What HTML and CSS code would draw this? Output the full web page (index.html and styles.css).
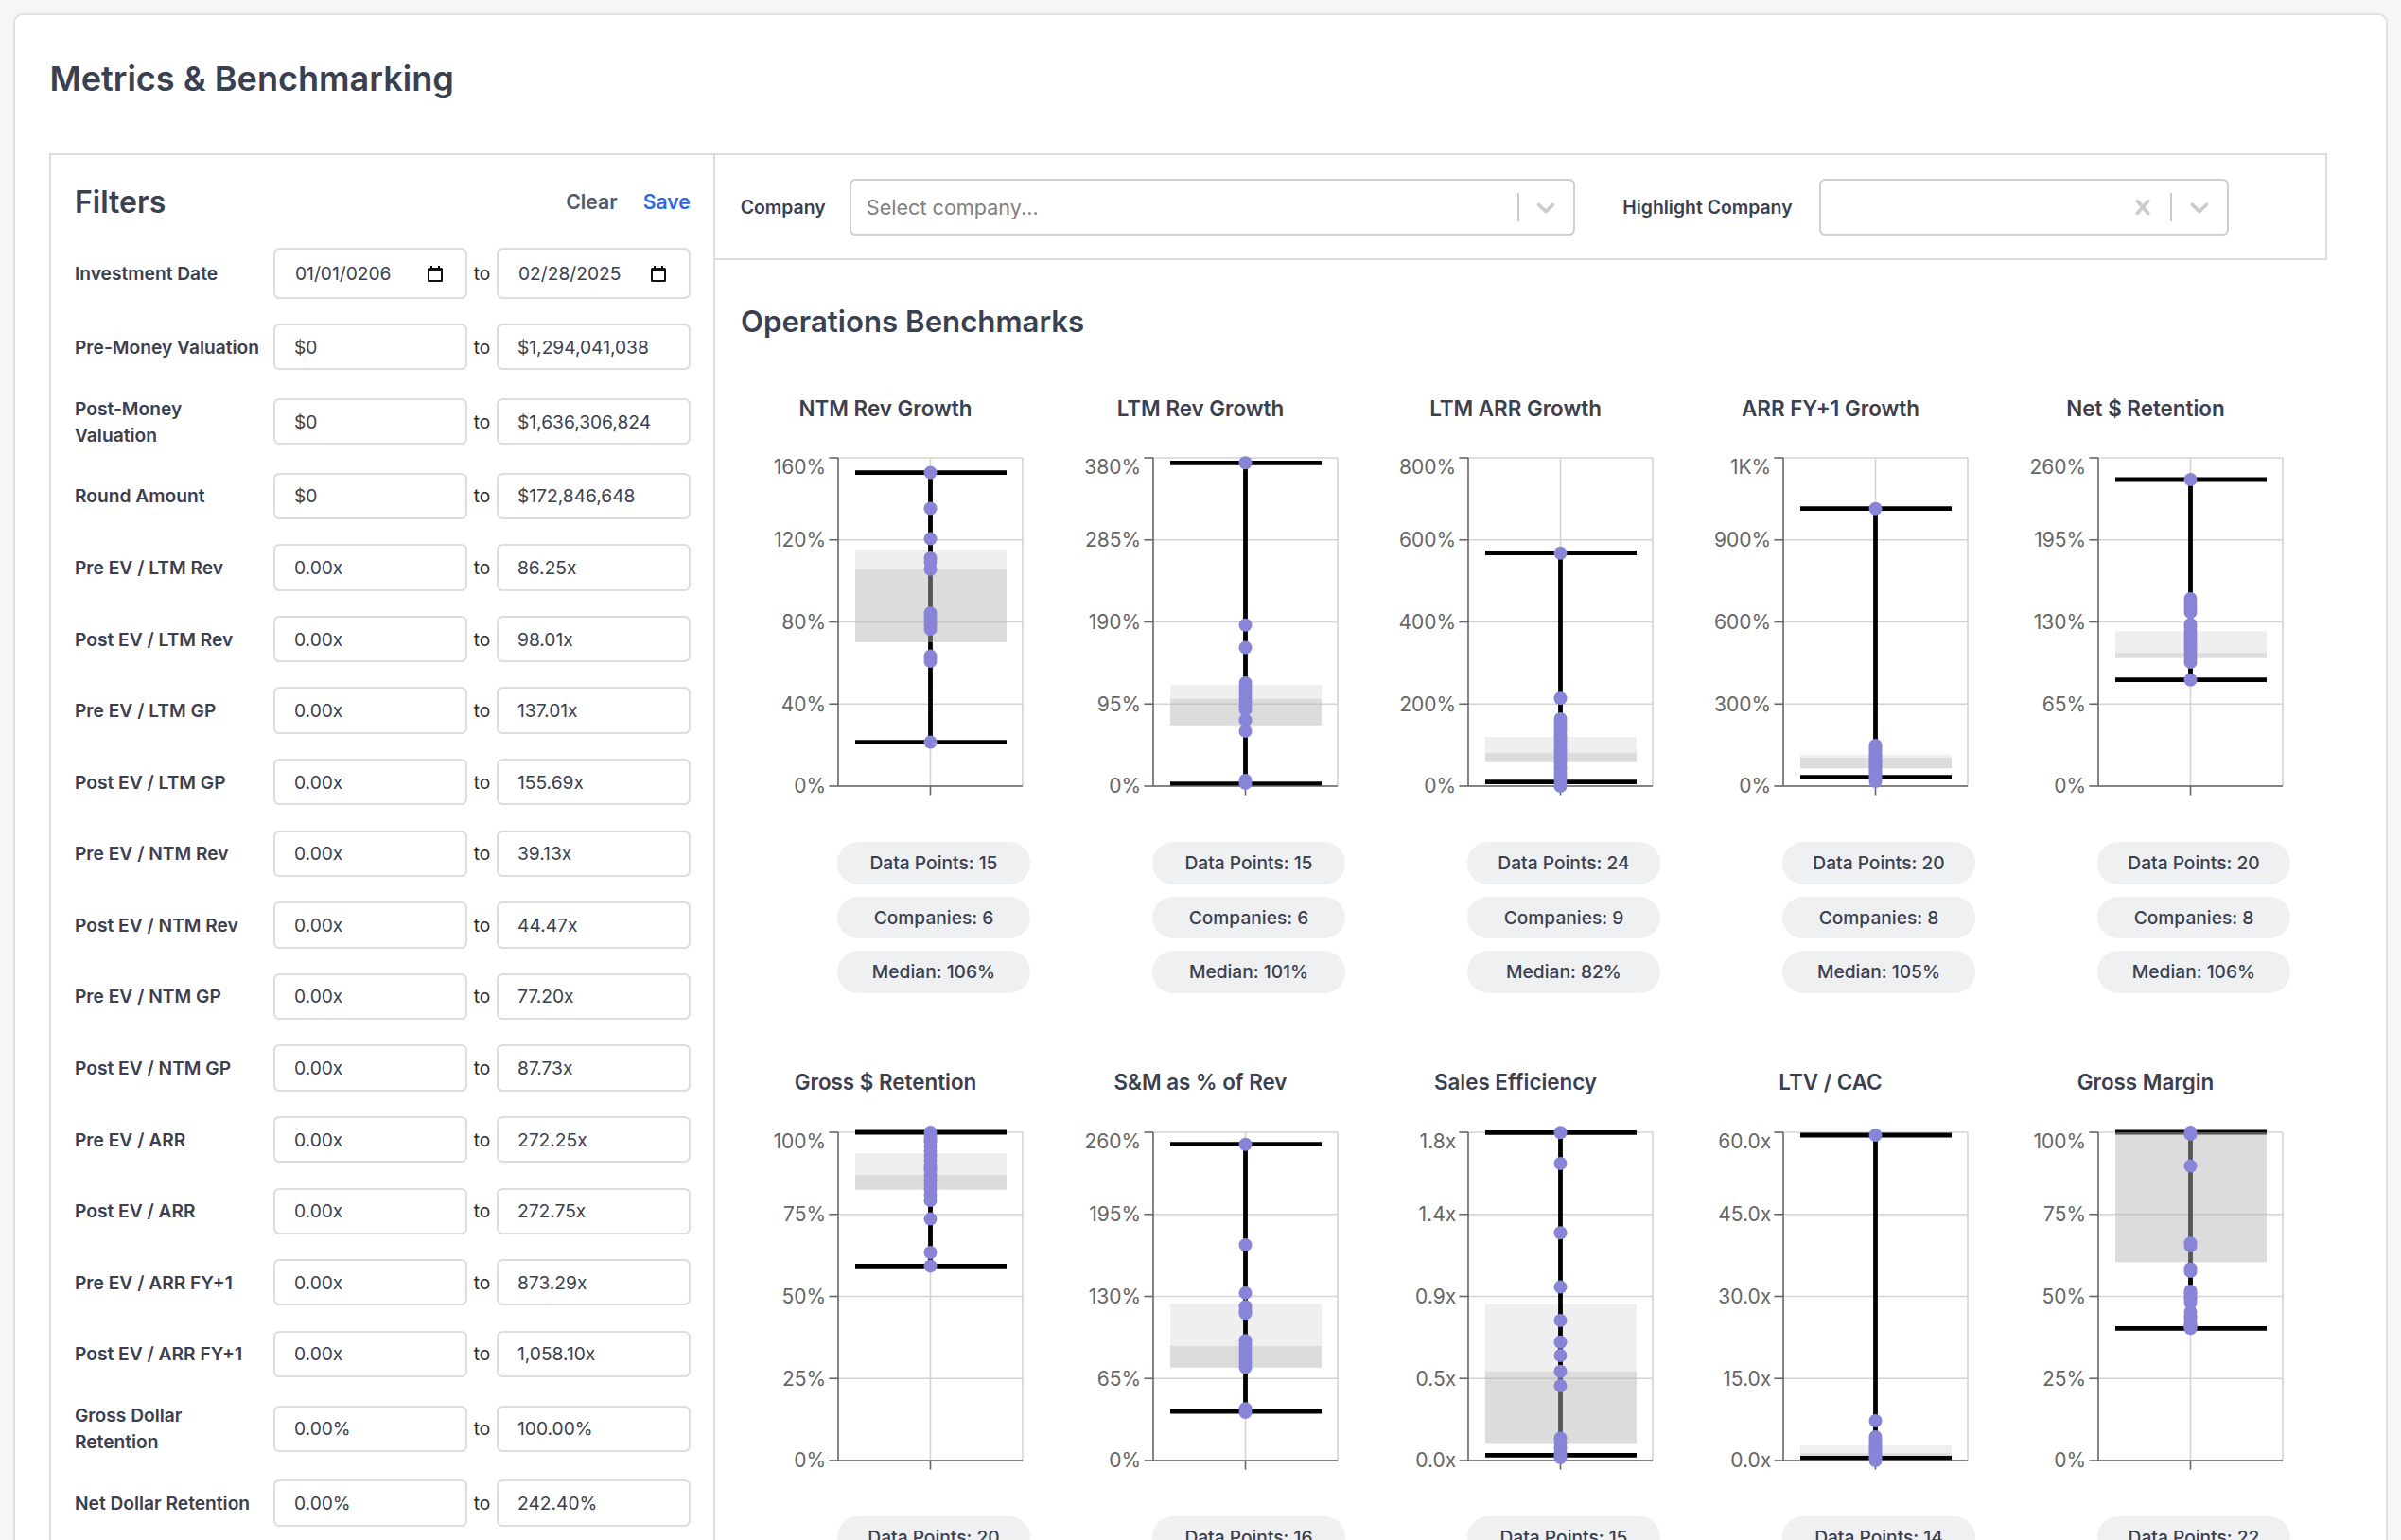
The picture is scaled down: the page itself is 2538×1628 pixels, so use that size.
FILE: index.html
```html
<!DOCTYPE html>
<html lang="en">
<head>
<meta charset="utf-8">
<title>Metrics &amp; Benchmarking</title>
<link rel="stylesheet" href="styles.css">
</head>
<body>
<div class="card">
  <h1 class="page-title">Metrics &amp; Benchmarking</h1>
  <div class="layout">
    <aside class="filters">
      <div class="filters-head">
        <h2>Filters</h2>
        <div class="actions">
          <button class="btn btn-clear" type="button">Clear</button>
          <button class="btn btn-save" type="button">Save</button>
        </div>
      </div>
      <div class="rows">
        <div class="row">
          <div class="lbl">Investment Date</div>
          <div class="inp date"><span>01/01/0206</span><svg class="cal" width="16" height="17" viewBox="0 0 16 17"><path fill="#111" fill-rule="evenodd" d="M3 0h2v2h6V0h2v2h1.5A1.5 1.5 0 0 1 16 3.5v12A1.5 1.5 0 0 1 14.5 17h-13A1.5 1.5 0 0 1 0 15.5v-12A1.5 1.5 0 0 1 1.5 2H3zM2 6v9h12V6z"/></svg></div>
          <div class="to">to</div>
          <div class="inp date"><span>02/28/2025</span><svg class="cal" width="16" height="17" viewBox="0 0 16 17"><path fill="#111" fill-rule="evenodd" d="M3 0h2v2h6V0h2v2h1.5A1.5 1.5 0 0 1 16 3.5v12A1.5 1.5 0 0 1 14.5 17h-13A1.5 1.5 0 0 1 0 15.5v-12A1.5 1.5 0 0 1 1.5 2H3zM2 6v9h12V6z"/></svg></div>
        </div>
        <div class="row"><div class="lbl">Pre-Money Valuation</div><input class="inp" type="text" value="$0" readonly><div class="to">to</div><input class="inp" type="text" value="$1,294,041,038" readonly></div>
        <div class="row"><div class="lbl">Post-Money<br>Valuation</div><input class="inp" type="text" value="$0" readonly><div class="to">to</div><input class="inp" type="text" value="$1,636,306,824" readonly></div>
        <div class="row"><div class="lbl">Round Amount</div><input class="inp" type="text" value="$0" readonly><div class="to">to</div><input class="inp" type="text" value="$172,846,648" readonly></div>
        <div class="row"><div class="lbl">Pre EV / LTM Rev</div><input class="inp" type="text" value="0.00x" readonly><div class="to">to</div><input class="inp" type="text" value="86.25x" readonly></div>
        <div class="row"><div class="lbl">Post EV / LTM Rev</div><input class="inp" type="text" value="0.00x" readonly><div class="to">to</div><input class="inp" type="text" value="98.01x" readonly></div>
        <div class="row"><div class="lbl">Pre EV / LTM GP</div><input class="inp" type="text" value="0.00x" readonly><div class="to">to</div><input class="inp" type="text" value="137.01x" readonly></div>
        <div class="row"><div class="lbl">Post EV / LTM GP</div><input class="inp" type="text" value="0.00x" readonly><div class="to">to</div><input class="inp" type="text" value="155.69x" readonly></div>
        <div class="row"><div class="lbl">Pre EV / NTM Rev</div><input class="inp" type="text" value="0.00x" readonly><div class="to">to</div><input class="inp" type="text" value="39.13x" readonly></div>
        <div class="row"><div class="lbl">Post EV / NTM Rev</div><input class="inp" type="text" value="0.00x" readonly><div class="to">to</div><input class="inp" type="text" value="44.47x" readonly></div>
        <div class="row"><div class="lbl">Pre EV / NTM GP</div><input class="inp" type="text" value="0.00x" readonly><div class="to">to</div><input class="inp" type="text" value="77.20x" readonly></div>
        <div class="row"><div class="lbl">Post EV / NTM GP</div><input class="inp" type="text" value="0.00x" readonly><div class="to">to</div><input class="inp" type="text" value="87.73x" readonly></div>
        <div class="row"><div class="lbl">Pre EV / ARR</div><input class="inp" type="text" value="0.00x" readonly><div class="to">to</div><input class="inp" type="text" value="272.25x" readonly></div>
        <div class="row"><div class="lbl">Post EV / ARR</div><input class="inp" type="text" value="0.00x" readonly><div class="to">to</div><input class="inp" type="text" value="272.75x" readonly></div>
        <div class="row"><div class="lbl">Pre EV / ARR FY+1</div><input class="inp" type="text" value="0.00x" readonly><div class="to">to</div><input class="inp" type="text" value="873.29x" readonly></div>
        <div class="row"><div class="lbl">Post EV / ARR FY+1</div><input class="inp" type="text" value="0.00x" readonly><div class="to">to</div><input class="inp" type="text" value="1,058.10x" readonly></div>
        <div class="row"><div class="lbl">Gross Dollar<br>Retention</div><input class="inp" type="text" value="0.00%" readonly><div class="to">to</div><input class="inp" type="text" value="100.00%" readonly></div>
        <div class="row"><div class="lbl">Net Dollar Retention</div><input class="inp" type="text" value="0.00%" readonly><div class="to">to</div><input class="inp" type="text" value="242.40%" readonly></div>
      </div>
    </aside>
    <main class="content">
      <div class="topbar">
        <div class="bar-label">Company</div>
        <div class="select select-company">
          <div class="placeholder">Select company...</div>
          <span class="sep"></span>
          <span class="ind"><svg width="32" height="32" viewBox="0 0 20 20"><path fill="#cccccc" d="M4.516 7.548c0.436-0.446 1.043-0.481 1.576 0l3.908 3.747 3.908-3.747c0.533-0.481 1.141-0.446 1.574 0 0.436 0.445 0.408 1.197 0 1.615-0.406 0.418-4.695 4.502-4.695 4.502-0.217 0.223-0.502 0.335-0.787 0.335s-0.57-0.112-0.789-0.335c0 0-4.287-4.084-4.695-4.502s-0.436-1.17 0-1.615z"/></svg></span>
        </div>
        <div class="bar-label">Highlight Company</div>
        <div class="select select-highlight">
          <div class="placeholder"></div>
          <span class="ind"><svg width="32" height="32" viewBox="0 0 20 20"><path fill="#cccccc" d="M14.348 14.849c-0.469 0.469-1.229 0.469-1.697 0l-2.651-3.030-2.651 3.029c-0.469 0.469-1.229 0.469-1.697 0-0.469-0.469-0.469-1.229 0-1.697l2.758-3.15-2.759-3.152c-0.469-0.469-0.469-1.228 0-1.697s1.228-0.469 1.697 0l2.652 3.031 2.651-3.031c0.469-0.469 1.228-0.469 1.697 0s0.469 1.229 0 1.697l-2.758 3.152 2.758 3.15c0.469 0.469 0.469 1.229 0 1.698z"/></svg></span>
          <span class="sep"></span>
          <span class="ind"><svg width="32" height="32" viewBox="0 0 20 20"><path fill="#cccccc" d="M4.516 7.548c0.436-0.446 1.043-0.481 1.576 0l3.908 3.747 3.908-3.747c0.533-0.481 1.141-0.446 1.574 0 0.436 0.445 0.408 1.197 0 1.615-0.406 0.418-4.695 4.502-4.695 4.502-0.217 0.223-0.502 0.335-0.787 0.335s-0.57-0.112-0.789-0.335c0 0-4.287-4.084-4.695-4.502s-0.436-1.17 0-1.615z"/></svg></span>
        </div>
      </div>
      <h3 class="section-title">Operations Benchmarks</h3>
      <div class="charts" id="charts"></div>
    </main>
  </div>
</div>
<script src="script.js"></script>
</body>
</html>
```

FILE: styles.css
```css
* { box-sizing: border-box; }
html { overflow: hidden; }
body {
  margin: 0;
  background: #f6f6f6;
  font-family: Inter, "Noto Sans", sans-serif;
  color: #3a4050;
}
.card {
  margin: 14px 14px 0;
  background: #fff;
  border: 2px solid #e0e0e0;
  border-radius: 10px;
  padding: 36.4px 36.4px 0;
}
.page-title {
  margin: 0 0 48px;
  font-size: 36.1px;
  line-height: 62px;
  font-weight: 600;
}
.layout { display: flex; align-items: flex-start; }
.filters {
  width: 704px;
  flex: none;
  border: 2px solid #dcdcdc;
  padding: 24.6px 24.6px 40px;
}
.filters-head {
  display: flex;
  align-items: center;
  justify-content: space-between;
  height: 50px;
  margin-bottom: 23.4px;
}
.filters-head h2 { margin: 0; font-size: 32px; line-height: 50px; font-weight: 600; }
.actions { display: flex; gap: 27px; }
.btn {
  border: 0; background: none; padding: 0; cursor: pointer;
  font-family: Inter, "Noto Sans", sans-serif; font-size: 21.2px; font-weight: 600; line-height: 1;
}
.btn-clear { color: #535b6b; }
.btn-save { color: #2f6ae0; }
.rows { display: flex; flex-direction: column; gap: 26.2px; }
.row {
  display: grid;
  grid-template-columns: 1fr 204.5px 31.5px 204.5px;
  align-items: center;
}
.lbl { font-size: 19.2px; font-weight: 600; line-height: 28px; white-space: nowrap; }
.inp {
  width: 100%;
  height: 49.4px;
  border: 2px solid #dddddd;
  border-radius: 6.4px;
  padding: 0 0 0 19.7px;
  font-family: Inter, "Noto Sans", sans-serif;
  font-size: 19.2px;
  color: #3a4050;
  background: #fff;
  outline: none;
}
.inp.date {
  height: 53.4px;
  display: flex;
  align-items: center;
  justify-content: space-between;
  padding: 0 24px 0 20.7px;
}
.cal { display: block; }
.to { text-align: center; font-size: 19.2px; color: #2a2a2a; }

.content { flex: 1; min-width: 0; margin-right: 26px; }
.topbar {
  height: 113px;
  border: 2px solid #dcdcdc;
  border-left: none;
  display: flex;
  align-items: center;
  padding-left: 26.3px;
}
.bar-label { font-size: 19.4px; font-weight: 600; white-space: nowrap; }
.select {
  height: 60px;
  border: 2px solid #d0d0d0;
  border-radius: 6.4px;
  display: flex;
  align-items: center;
  flex: none;
}
.select-company { width: 767px; margin: 0 50px 0 25.6px; }
.select-highlight { width: 433px; margin-left: 28px; }
.placeholder { flex: 1; padding-left: 15.6px; color: #808080; font-size: 21.6px; white-space: nowrap; }
.sep { width: 2px; align-self: stretch; margin: 12.8px 0; background: #cccccc; }
.ind { width: 57.6px; display: flex; justify-content: center; align-items: center; }
.ind svg { display: block; }

.section-title {
  margin: 45.3px 0 58.8px 26.6px;
  font-size: 31.2px;
  line-height: 38.4px;
  font-weight: 600;
}
.charts {
  display: grid;
  grid-template-columns: repeat(5, 306px);
  column-gap: 27px;
  row-gap: 80.65px;
  padding-left: 26.6px;
}
.chart-title {
  text-align: center;
  font-size: 22.4px;
  line-height: 27px;
  font-weight: 600;
  margin-bottom: 15.35px;
  white-space: nowrap;
}
.plot { display: block; overflow: visible; }
.grid { stroke: #d4d4d4; stroke-width: 1.6; }
.axis { stroke: #666666; stroke-width: 1.6; }
.whisker { stroke: #000000; stroke-width: 4.8; }
.q-light { fill: #efefef; }
.q-dark { fill: #b4b4b4; fill-opacity: 0.47; }
.dot { fill: #8884d8; }
.tick { font-family: Inter, "Noto Sans", sans-serif; font-size: 21px; fill: #666666; }
.pills {
  margin: 40px 0 0 102px;
  width: 204px;
  display: flex;
  flex-direction: column;
  gap: 13px;
}
.pill {
  height: 44.5px;
  border-radius: 22.25px;
  background: #eff0f1;
  display: flex;
  align-items: center;
  justify-content: center;
  font-size: 19.2px;
  font-weight: 500;
  white-space: nowrap;
}
```

FILE: script.js
```js
(function () {
  var charts = [
    { title: 'NTM Rev Growth', ticks: ['0%', '40%', '80%', '120%', '160%'], cap: [15.6, 300.6], light: [97, 117.8], dark: [117.8, 195],
      dots: [15.6, 53.5, 85.6, 106, 110, 117.8, 164.2, 168.5, 172.8, 177, 181, 209.6, 212, 215, 300.6],
      pills: ['Data Points: 15', 'Companies: 6', 'Median: 106%'] },
    { title: 'LTM Rev Growth', ticks: ['0%', '95%', '190%', '285%', '380%'], cap: [5.3, 344.6], light: [239.9, 254.9], dark: [254.9, 282.8],
      dots: [5.3, 176.7, 200.6, 238, 242, 246, 250, 254, 258, 262, 266, 277.4, 288.9, 341, 344],
      pills: ['Data Points: 15', 'Companies: 6', 'Median: 101%'] },
    { title: 'LTM ARR Growth', ticks: ['0%', '200%', '400%', '600%', '800%'], cap: [100.7, 342.7], light: [295, 311.7], dark: [311.7, 321.7],
      dots: [100.7, 254.3, 276, 279, 283, 286, 289, 293, 296, 299, 302, 306, 309, 312, 316, 319, 322, 326, 329, 333, 336, 340, 344, 347],
      pills: ['Data Points: 24', 'Companies: 9', 'Median: 82%'] },
    { title: 'ARR FY+1 Growth', ticks: ['0%', '300%', '600%', '900%', '1K%'], cap: [53.7, 337.7], light: [313.7, 317], dark: [317, 328.3],
      dots: [53.7, 304, 306, 308, 310, 313, 315, 317, 319, 321, 323, 325, 327, 329, 331, 333, 335, 337, 339, 342],
      pills: ['Data Points: 20', 'Companies: 8', 'Median: 105%'] },
    { title: 'Net $ Retention', ticks: ['0%', '65%', '130%', '195%', '260%'], cap: [23, 234.7], light: [183.3, 206], dark: [206, 211.7],
      dots: [23, 149, 152, 156, 160, 163, 176, 179, 183, 186, 189, 192, 196, 199, 202, 206, 209, 213, 216, 234.7],
      pills: ['Data Points: 20', 'Companies: 8', 'Median: 106%'] },
    { title: 'Gross $ Retention', ticks: ['0%', '25%', '50%', '75%', '100%'], cap: [0, 141.4], light: [22.3, 45.3], dark: [45.3, 60.7],
      dots: [0, 5, 8, 10, 15, 20, 25, 30, 35, 38, 40, 45, 50, 55, 60, 66, 72, 91.6, 127, 141.4],
      pills: ['Data Points: 20'] },
    { title: 'S&M as % of Rev', ticks: ['0%', '65%', '130%', '195%', '260%'], cap: [12.7, 295.1], light: [181.2, 226.1], dark: [226.1, 248.8],
      dots: [12.7, 119.1, 169.9, 184.3, 188, 191.3, 220.3, 224, 228, 232, 236, 240, 244, 248.6, 292.3, 296],
      pills: ['Data Points: 16'] },
    { title: 'Sales Efficiency', ticks: ['0.0x', '0.5x', '0.9x', '1.4x', '1.8x'], cap: [0.3, 341.3], light: [181.7, 252.8], dark: [252.8, 328.5],
      dots: [0.3, 32.9, 106.3, 163.6, 198.9, 221.8, 235.9, 252.8, 267.9, 323.5, 328, 333.6, 338, 341.5, 344],
      pills: ['Data Points: 15'] },
    { title: 'LTV / CAC', ticks: ['0.0x', '15.0x', '30.0x', '45.0x', '60.0x'], cap: [3, 344.3], light: [331.3, 339.3], dark: [339.3, 342],
      dots: [3, 305, 322, 325, 328, 331, 333, 335, 337, 339, 341, 343, 345, 347],
      pills: ['Data Points: 14'] },
    { title: 'Gross Margin', ticks: ['0%', '25%', '50%', '75%', '100%'], cap: [0, 207.3], light: null, dark: [0, 137.3],
      dots: [0, 2, 35.6, 117.3, 120, 144.3, 147, 168, 170.3, 173, 175, 177, 180, 190, 193.9, 196, 200, 203, 205, 207.3, 206, 204],
      pills: ['Data Points: 22'] }
  ];

  var W = 306, H = 390, X0 = 103, X1 = 298, TOP = 24, BOT = 371, CX = 200.5, BX0 = 121, BX1 = 281;
  var NS = 'http://www.w3.org/2000/svg';

  function el(tag, attrs, parent) {
    var e = document.createElementNS(NS, tag);
    for (var k in attrs) { if (attrs.hasOwnProperty(k)) e.setAttribute(k, attrs[k]); }
    if (parent) parent.appendChild(e);
    return e;
  }

  var root = document.getElementById('charts');
  if (!root) return;
  var ph = BOT - TOP;

  charts.forEach(function (c) {
    var col = document.createElement('div');
    col.className = 'chart';
    var t = document.createElement('div');
    t.className = 'chart-title';
    t.textContent = c.title;
    col.appendChild(t);

    var svg = el('svg', { 'class': 'plot', width: W, height: H, viewBox: '0 0 ' + W + ' ' + H });
    var i, y;
    for (i = 0; i < 5; i++) {
      y = BOT - i * ph / 4;
      el('line', { x1: X0, x2: X1, y1: y, y2: y, 'class': 'grid' }, svg);
    }
    el('line', { x1: CX, x2: CX, y1: TOP, y2: BOT, 'class': 'grid' }, svg);
    el('line', { x1: X1, x2: X1, y1: TOP, y2: BOT, 'class': 'grid' }, svg);

    if (c.light) {
      el('rect', { x: BX0, y: TOP + c.light[0], width: BX1 - BX0, height: c.light[1] - c.light[0], 'class': 'q-light' }, svg);
    }
    el('line', { x1: CX, x2: CX, y1: TOP + c.cap[0], y2: TOP + c.cap[1], 'class': 'whisker' }, svg);
    el('line', { x1: BX0, x2: BX1, y1: TOP + c.cap[0], y2: TOP + c.cap[0], 'class': 'whisker' }, svg);
    el('line', { x1: BX0, x2: BX1, y1: TOP + c.cap[1], y2: TOP + c.cap[1], 'class': 'whisker' }, svg);
    if (c.dark) {
      el('rect', { x: BX0, y: TOP + c.dark[0], width: BX1 - BX0, height: c.dark[1] - c.dark[0], 'class': 'q-dark' }, svg);
    }

    el('line', { x1: X0, x2: X0, y1: TOP, y2: BOT, 'class': 'axis' }, svg);
    el('line', { x1: X0, x2: X1, y1: BOT, y2: BOT, 'class': 'axis' }, svg);
    el('line', { x1: CX, x2: CX, y1: BOT, y2: BOT + 9.6, 'class': 'axis' }, svg);
    for (i = 0; i < 5; i++) {
      y = BOT - i * ph / 4;
      el('line', { x1: X0 - 9.6, x2: X0, y1: y, y2: y, 'class': 'axis' }, svg);
      var ty = (i === 4) ? y + 9.5 : y;
      var tx = el('text', { x: X0 - 12.8, y: ty, dy: '0.355em', 'text-anchor': 'end', 'class': 'tick' }, svg);
      tx.textContent = c.ticks[i];
    }

    c.dots.forEach(function (d) {
      el('circle', { cx: CX, cy: TOP + d, r: 7, 'class': 'dot' }, svg);
    });
    col.appendChild(svg);

    var p = document.createElement('div');
    p.className = 'pills';
    c.pills.forEach(function (txt) {
      var s = document.createElement('div');
      s.className = 'pill';
      s.textContent = txt;
      p.appendChild(s);
    });
    col.appendChild(p);
    root.appendChild(col);
  });
})();
```
